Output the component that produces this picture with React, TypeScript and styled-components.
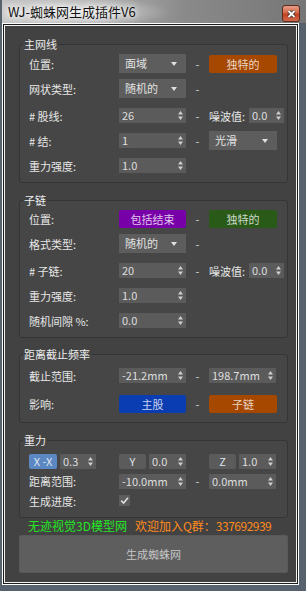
import React from "react";
import styled, { createGlobalStyle } from "styled-components";

const GlobalStyle = createGlobalStyle`
  html, body {
    margin: 0;
    padding: 0;
    background: #58626e;
  }
  body {
    font-family: "Noto Sans CJK SC", "Noto Sans", sans-serif;
  }
`;

const Window = styled.div`
  width: 306px;
  height: 591px;
  box-sizing: border-box;
  background: #58626e;
  display: flex;
  flex-direction: column;
  padding: 0 7px 6px 2px;
`;

const TitleBar = styled.div`
  height: 23px;
  margin-right: -7px;
  display: flex;
  align-items: flex-start;
  padding-left: 6px;
  background: radial-gradient(
      ellipse 100px 15px at 70px 12px,
      rgba(255, 255, 255, 0.6),
      rgba(255, 255, 255, 0) 100%
    ),
    linear-gradient(90deg, #c4c4c4 0%, #acacac 35%, #8a8a8a 60%, #767676 100%);
`;

const Title = styled.span`
  margin-top: 4px;
  font-size: 13px;
  line-height: 15px;
  color: #111;
  text-shadow: 0 0 5px #fff, 0 0 8px #fff;
`;

const Close = styled.div`
  margin-left: auto;
  margin-right: 6px;
  margin-top: 5px;
  width: 18px;
  height: 17px;
  box-sizing: border-box;
  border: 1px solid #5b2b22;
  border-radius: 3px;
  background: linear-gradient(#e69c87 0%, #d56a4c 45%, #c3401e 55%, #d26a4b 100%);
  display: flex;
  align-items: center;
  justify-content: center;
`;

const Frame = styled.div`
  flex: 1;
  border: 1px solid #fff;
  background: #1c1c1c;
  padding: 1px;
  display: flex;
`;

const Inner = styled.div`
  flex: 1;
  border: 1px solid #f2f2f2;
  background: #424242;
  padding: 0 8px 0 14px;
  display: flex;
  flex-direction: column;
`;

const Group = styled.div<{ $mt: number; $pt: number; $pb: number }>`
  position: relative;
  margin-top: ${(p) => p.$mt}px;
  padding-top: ${(p) => p.$pt}px;
  padding-bottom: ${(p) => p.$pb}px;
  border: 1px solid #353535;
  border-radius: 3px;
  background: #464646;
`;

const Legend = styled.span`
  position: absolute;
  top: -8px;
  left: 3px;
  padding: 0 1px;
  font-size: 11px;
  line-height: 14px;
  color: #ececec;
  background: linear-gradient(#424242 50%, #464646 50%);
`;

const Row = styled.div<{ $h: number; $mt?: number }>`
  display: flex;
  align-items: center;
  height: ${(p) => p.$h}px;
  margin-top: ${(p) => p.$mt ?? 0}px;
  padding-left: 9px;
`;

const Label = styled.div`
  width: 90px;
  flex-shrink: 0;
  font-size: 11px;
  color: #e6e6e6;
  white-space: pre;
`;

const Cell = styled.div<{ $w: number }>`
  width: ${(p) => p.$w}px;
  flex-shrink: 0;
  display: flex;
  align-items: center;
  gap: 3px;
`;

const Dash = styled.div`
  width: 23px;
  flex-shrink: 0;
  text-align: center;
  font-size: 11px;
  color: #dcdcdc;
`;

const SubLabel = styled.div`
  width: 40px;
  flex-shrink: 0;
  font-size: 11px;
  color: #e6e6e6;
`;

const SpinBox = styled.div<{ $w: number }>`
  width: ${(p) => p.$w}px;
  height: 15px;
  box-sizing: border-box;
  flex-shrink: 0;
  background: #5b5b5b;
  display: flex;
  align-items: center;
  padding: 0 3px 0 3px;
  font-size: 11px;
  color: #dedede;
`;

const SpinValue = styled.span`
  flex: 1;
  line-height: 15px;
`;

const Drop = styled.div<{ $w: number }>`
  width: ${(p) => p.$w}px;
  height: 19px;
  box-sizing: border-box;
  flex-shrink: 0;
  background: #5d5d5d;
  display: flex;
  align-items: center;
  padding: 0 9px 0 6px;
  font-size: 11px;
  color: #e2e2e2;
`;

const ColorButton = styled.div<{ $bg: string; $w: number }>`
  width: ${(p) => p.$w}px;
  height: 18px;
  flex-shrink: 0;
  border-radius: 2px;
  background: ${(p) => p.$bg};
  display: flex;
  align-items: center;
  justify-content: center;
  font-size: 11px;
  color: rgba(255, 255, 255, 0.78);
`;

const AxisButton = styled.div<{ $bg: string; $w: number }>`
  width: ${(p) => p.$w}px;
  height: 15px;
  flex-shrink: 0;
  border-radius: 2px;
  background: ${(p) => p.$bg};
  display: flex;
  align-items: center;
  justify-content: center;
  font-size: 11px;
  color: #dfe6f0;
`;

const Check = styled.div`
  width: 11px;
  height: 11px;
  background: #5d5d5d;
  display: flex;
  align-items: center;
  justify-content: center;
`;

const Promo = styled.div`
  margin-top: 1px;
  padding-left: 9px;
  display: flex;
  gap: 8px;
  font-size: 12px;
  line-height: 14px;
  white-space: nowrap;
`;

const Green = styled.span`
  color: #22e622;
`;

const Orange = styled.span`
  color: #ff8a1c;
`;

const Digits = styled.span`
  letter-spacing: -0.5px;
`;

const BigButton = styled.div`
  margin-top: 2px;
  height: 38px;
  border-radius: 3px;
  background: #5e5e5e;
  box-shadow: inset 0 0 0 1px #595959;
  display: flex;
  align-items: center;
  justify-content: center;
  font-size: 11px;
  color: #c6c6c6;
`;

const SpinArrows = () => (
  <svg width="5" height="9" viewBox="0 0 5 9">
    <polygon points="0,3.5 2.5,0 5,3.5" fill="#cfcfcf" />
    <polygon points="0,5.5 2.5,9 5,5.5" fill="#cfcfcf" />
  </svg>
);

const Spinner = ({ value, w = 67 }: { value: string; w?: number }) => (
  <SpinBox $w={w}>
    <SpinValue>{value}</SpinValue>
    <SpinArrows />
  </SpinBox>
);

const Dropdown = ({ value, w = 67 }: { value: string; w?: number }) => (
  <Drop $w={w}>
    <SpinValue>{value}</SpinValue>
    <svg width="6" height="4" viewBox="0 0 6 4">
      <polygon points="0,0 6,0 3,4" fill="#e0e0e0" />
    </svg>
  </Drop>
);

const ORANGE = "#a64800";
const PURPLE = "#7700a8";
const GREEN = "#2a5a17";
const BLUE = "#0a3cb2";
const GREY = "#5b5b5b";

export default function App() {
  return (
    <>
      <GlobalStyle />
      <Window>
        <TitleBar>
          <Title>WJ-蜘蛛网生成插件V6</Title>
          <Close>
            <svg width="9" height="8" viewBox="0 0 9 8">
              <path d="M1.5 1 L7.5 7 M7.5 1 L1.5 7" stroke="#3a2a28" strokeWidth="3.4" />
              <path d="M1.5 1 L7.5 7 M7.5 1 L1.5 7" stroke="#fff" strokeWidth="1.8" />
            </svg>
          </Close>
        </TitleBar>
        <Frame>
          <Inner>
            <Group $mt={18} $pt={6} $pb={4}>
              <Legend>主网线</Legend>
              <Row $h={25}>
                <Label>位置:</Label>
                <Cell $w={67}><Dropdown value="面域" /></Cell>
                <Dash>-</Dash>
                <Cell $w={68}><ColorButton $bg={ORANGE} $w={68}>独特的</ColorButton></Cell>
              </Row>
              <Row $h={25}>
                <Label>网状类型:</Label>
                <Cell $w={67}><Dropdown value="随机的" /></Cell>
                <Dash>-</Dash>
              </Row>
              <Row $h={25} $mt={2}>
                <Label># 股线:</Label>
                <Cell $w={67}><Spinner value="26" /></Cell>
                <Dash>-</Dash>
                <SubLabel>噪波值:</SubLabel>
                <Spinner value="0.0" w={35} />
              </Row>
              <Row $h={25}>
                <Label># 结:</Label>
                <Cell $w={67}><Spinner value="1" /></Cell>
                <Dash>-</Dash>
                <Cell $w={68}><Dropdown value="光滑" w={68} /></Cell>
              </Row>
              <Row $h={25}>
                <Label>重力强度:</Label>
                <Cell $w={67}><Spinner value="1.0" /></Cell>
              </Row>
            </Group>

            <Group $mt={17} $pt={5} $pb={4}>
              <Legend>子链</Legend>
              <Row $h={25}>
                <Label>位置:</Label>
                <Cell $w={67}><ColorButton $bg={PURPLE} $w={67}>包括结束</ColorButton></Cell>
                <Dash>-</Dash>
                <Cell $w={68}><ColorButton $bg={GREEN} $w={68}>独特的</ColorButton></Cell>
              </Row>
              <Row $h={25}>
                <Label>格式类型:</Label>
                <Cell $w={67}><Dropdown value="随机的" /></Cell>
                <Dash>-</Dash>
              </Row>
              <Row $h={25} $mt={2}>
                <Label># 子链:</Label>
                <Cell $w={67}><Spinner value="20" /></Cell>
                <Dash>-</Dash>
                <SubLabel>噪波值:</SubLabel>
                <Spinner value="0.0" w={35} />
              </Row>
              <Row $h={25}>
                <Label>重力强度:</Label>
                <Cell $w={67}><Spinner value="1.0" /></Cell>
              </Row>
              <Row $h={25}>
                <Label>随机间隙 %:</Label>
                <Cell $w={67}><Spinner value="0.0" /></Cell>
              </Row>
            </Group>

            <Group $mt={16} $pt={8} $pb={6}>
              <Legend>距离截止频率</Legend>
              <Row $h={25}>
                <Label>截止范围:</Label>
                <Cell $w={67}><Spinner value="-21.2mm" /></Cell>
                <Dash>-</Dash>
                <Cell $w={68}><Spinner value="198.7mm" /></Cell>
              </Row>
              <Row $h={25} $mt={3}>
                <Label>影响:</Label>
                <Cell $w={67}><ColorButton $bg={BLUE} $w={67}>主股</ColorButton></Cell>
                <Dash>-</Dash>
                <Cell $w={68}><ColorButton $bg={ORANGE} $w={68}>子链</ColorButton></Cell>
              </Row>
            </Group>

            <Group $mt={17} $pt={10} $pb={7}>
              <Legend>重力</Legend>
              <Row $h={20}>
                <Cell $w={90}>
                  <AxisButton $bg="#5b87c3" $w={28}>X -X</AxisButton>
                  <Spinner value="0.3" w={36} />
                </Cell>
                <Cell $w={67}>
                  <AxisButton $bg={GREY} $w={27}>Y</AxisButton>
                  <Spinner value="0.0" w={37} />
                </Cell>
                <Dash />
                <Cell $w={68}>
                  <AxisButton $bg={GREY} $w={27}>Z</AxisButton>
                  <Spinner value="1.0" w={37} />
                </Cell>
              </Row>
              <Row $h={20}>
                <Label>距离范围:</Label>
                <Cell $w={67}><Spinner value="-10.0mm" /></Cell>
                <Dash>-</Dash>
                <Cell $w={68}><Spinner value="0.0mm" /></Cell>
              </Row>
              <Row $h={19}>
                <Label>生成进度:</Label>
                <Check>
                  <svg width="9" height="9" viewBox="0 0 9 9">
                    <path d="M1.2 4.6 L3.6 7 L8 1.8" stroke="#dcdcdc" strokeWidth="1.6" fill="none" />
                  </svg>
                </Check>
              </Row>
            </Group>

            <Promo>
              <Green>无迹视觉3D模型网</Green>
              <Orange>
                欢迎加入Q群：<Digits>337692939</Digits>
              </Orange>
            </Promo>
            <BigButton>生成蜘蛛网</BigButton>
          </Inner>
        </Frame>
      </Window>
    </>
  );
}
